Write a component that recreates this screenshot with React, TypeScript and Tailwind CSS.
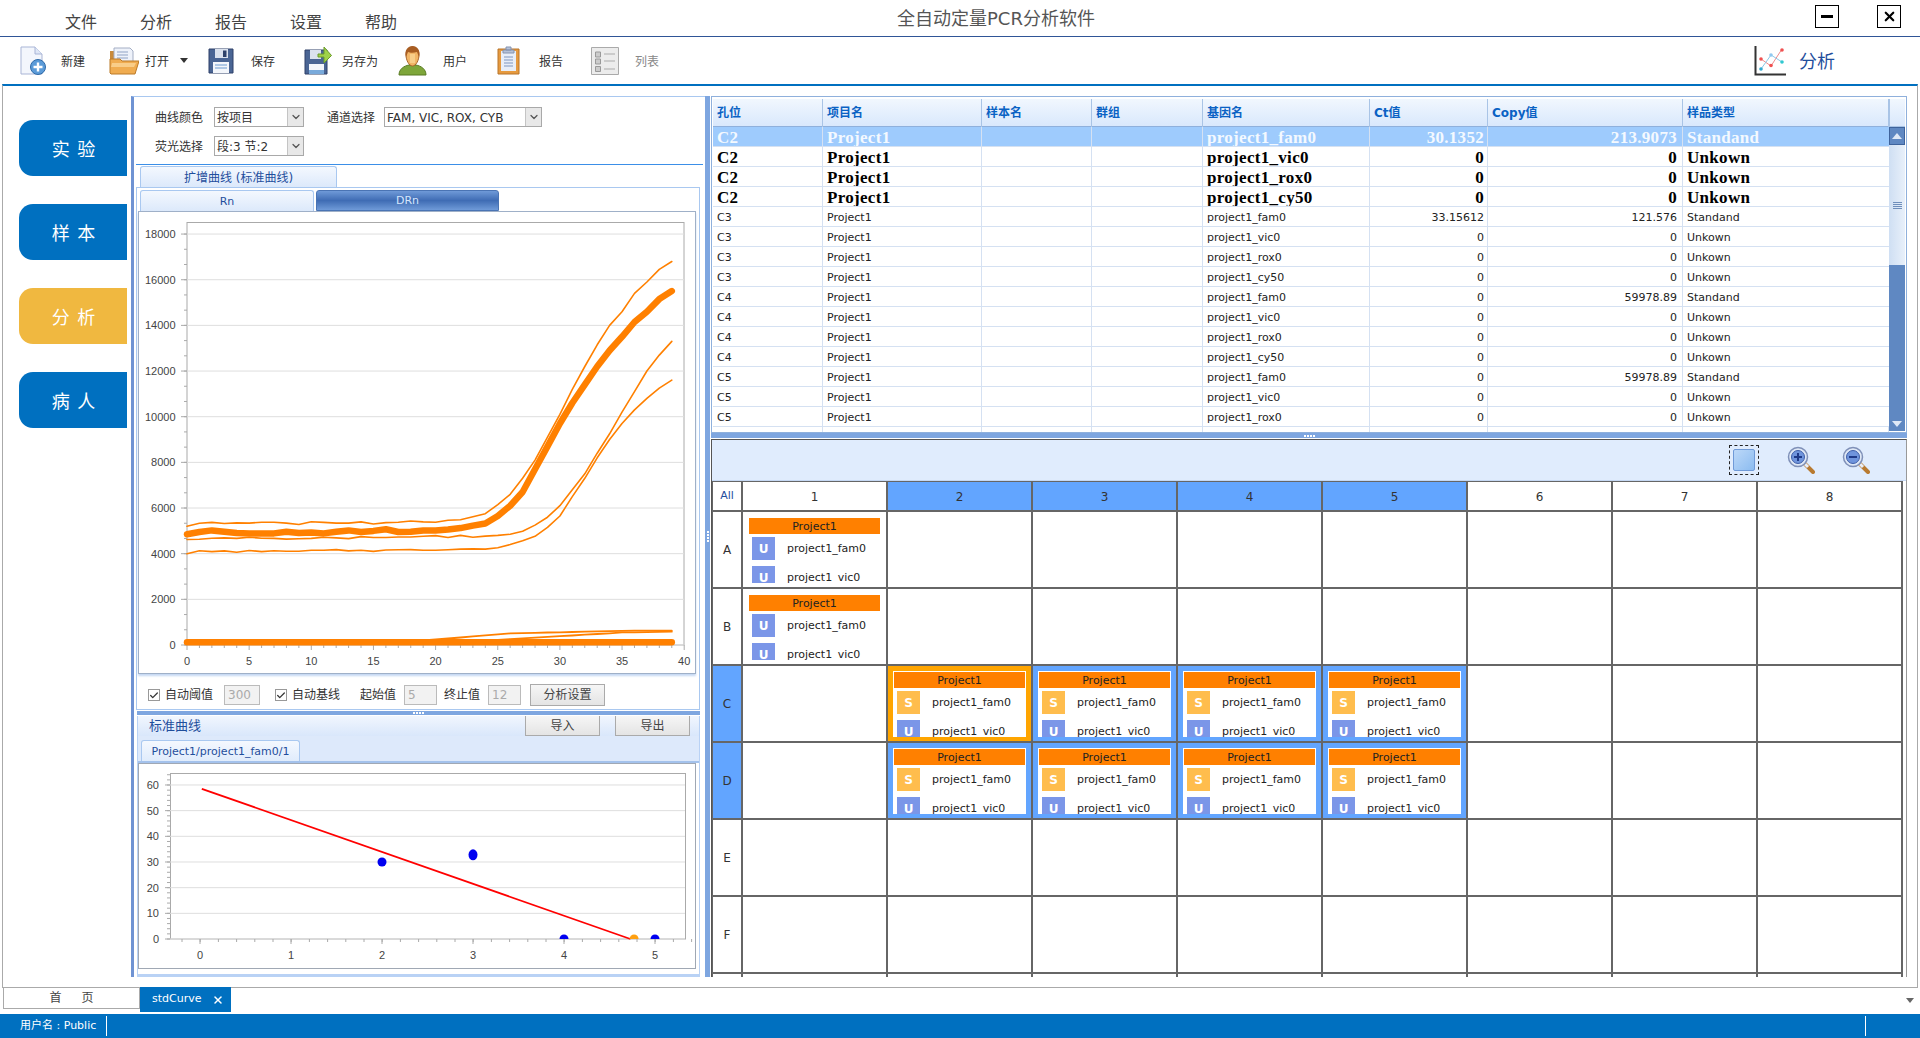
import { Check, ChevronDown, X } from "lucide-react";

const menus = ["文件", "分析", "报告", "设置", "帮助"];

const columns = ["孔位", "项目名", "样本名", "群组", "基因名", "Ct值", "Copy值", "样品类型"];

const tableRows = [
  ["C2", "project1_fam0", "30.1352", "213.9073", "Standand"],
  ["C2", "project1_vic0", "0", "0", "Unkown"],
  ["C2", "project1_rox0", "0", "0", "Unkown"],
  ["C2", "project1_cy50", "0", "0", "Unkown"],
  ["C3", "project1_fam0", "33.15612", "121.576", "Standand"],
  ["C3", "project1_vic0", "0", "0", "Unkown"],
  ["C3", "project1_rox0", "0", "0", "Unkown"],
  ["C3", "project1_cy50", "0", "0", "Unkown"],
  ["C4", "project1_fam0", "0", "59978.89", "Standand"],
  ["C4", "project1_vic0", "0", "0", "Unkown"],
  ["C4", "project1_rox0", "0", "0", "Unkown"],
  ["C4", "project1_cy50", "0", "0", "Unkown"],
  ["C5", "project1_fam0", "0", "59978.89", "Standand"],
  ["C5", "project1_vic0", "0", "0", "Unkown"],
  ["C5", "project1_rox0", "0", "0", "Unkown"],
];

// amplification curves, one value per cycle
const curveA = [5200, 5330, 5370, 5320, 5350, 5340, 5380, 5380, 5340, 5280, 5400, 5370, 5340, 5340, 5390, 5300, 5360, 5380, 5430, 5390, 5380, 5460, 5490, 5620, 5750, 6150, 6600, 7300, 8100, 9100, 10100, 11200, 12200, 13150, 14000, 14600, 15400, 15900, 16450, 16800];
const curveB = [4850, 4950, 5020, 4960, 4900, 4880, 4890, 4890, 4960, 4900, 4930, 4890, 4960, 5020, 4950, 5000, 5070, 4950, 4960, 5010, 5020, 5060, 5120, 5230, 5320, 5650, 6100, 6700, 7700, 8700, 9700, 10600, 11400, 12200, 12900, 13500, 14150, 14600, 15150, 15500];
const curveC = [4620, 4630, 4680, 4690, 4670, 4720, 4680, 4670, 4640, 4650, 4670, 4720, 4690, 4660, 4750, 4710, 4710, 4730, 4730, 4760, 4790, 4710, 4800, 4720, 4770, 4800, 4850, 4980, 5250, 5600, 6100, 6800, 7500, 8400, 9250, 10200, 11100, 12000, 12700, 13300];
const curveD = [4000, 4130, 4090, 4120, 4060, 4140, 4090, 4130, 4110, 4110, 4150, 4150, 4180, 4120, 4150, 4100, 4160, 4170, 4180, 4150, 4150, 4170, 4200, 4210, 4200, 4260, 4400, 4570, 4760, 5150, 5650, 6500, 7300, 8200, 9000, 9700, 10300, 10800, 11250, 11600];
const curveE = Array.from({ length: 40 }, (_, i) => (i < 18 ? 150 : i < 26 ? 150 + (i - 18) * 45 : Math.min(510 + (i - 26) * 12, 630)));
const curveF = Array.from({ length: 40 }, (_, i) => (i < 22 ? 130 : i < 35 ? 130 + (i - 22) * 32 : 550 + (i - 35) * 8));
const curveG = Array.from({ length: 40 }, () => 120);

const toPath = (vals: number[]) =>
  vals.map((v, i) => `${i === 0 ? "M" : "L"}${(187 + i * 12.43).toFixed(1)} ${(645 - v * 0.02283).toFixed(1)}`).join(" ");

function NewIcon() {
  return (
    <svg width="26" height="29" viewBox="0 0 26 29" className="ml-[20px] shrink-0">
      <path d="M1 1h14l7 7v20H1z" fill="#f3f6fc" stroke="#a9b5d6" />
      <path d="M15 1v7h7" fill="#dfe7f6" stroke="#a9b5d6" />
      <circle cx="18" cy="21" r="7.5" fill="#5b9bd8" stroke="#2f6aa8" />
      <path d="M18 16.5v9M13.5 21h9" stroke="#fff" strokeWidth="2.4" />
    </svg>
  );
}

function OpenIcon() {
  return (
    <svg width="30" height="28" viewBox="0 0 30 28" className="ml-[24px] shrink-0">
      <path d="M1 4h5v20H1z" fill="#c98a3a" />
      <path d="M5 1h16l3 3v12H5z" fill="#eef2fa" stroke="#a4aec4" />
      <path d="M8 5h11M8 8h11M8 11h11" stroke="#8fa2c4" />
      <path d="M1 26V12h10l2 2h17l-4 13H2z" fill="#f0ac50" stroke="#bb7a28" />
      <path d="M3 16h24l-2 4H2z" fill="#f9cd88" />
    </svg>
  );
}

function FloppyBody() {
  return (
    <>
      <path d="M1 1h24v24H1z" fill="#4a6594" stroke="#2e4169" />
      <path d="M7 1h13v9H7z" fill="#dbe2ee" />
      <path d="M15 2.500h3.500v6.500H15z" fill="#2e4169" />
      <path d="M5 14h16v11H5z" fill="#f3f6fb" />
      <path d="M7 17h12M7 20h12" stroke="#6a9ad0" />
    </>
  );
}

function SaveIcon() {
  return (
    <svg width="26" height="26" viewBox="0 0 26 26" className="ml-[20px] shrink-0">
      <FloppyBody />
    </svg>
  );
}

function SaveAsIcon() {
  return (
    <svg width="28" height="29" viewBox="0 0 28 29" className="ml-[29px] shrink-0">
      <g transform="translate(0 3)">
        <path d="M1 1h22v24H1z" fill="#4a6594" stroke="#2e4169" />
        <path d="M6 1h11v9H6z" fill="#dbe2ee" />
        <path d="M5 15h15v10H5z" fill="#f3f6fb" />
        <path d="M5 21h15v4H5z" fill="#79aadb" />
      </g>
      <path d="M14 8h6V1l7.500 8.500L20 17v-6h-6z" fill="#9ed24a" stroke="#6a9a2a" />
    </svg>
  );
}

function UserIcon() {
  return (
    <svg width="29" height="30" viewBox="0 0 29 30" className="ml-[20px] shrink-0">
      <path d="M1 29c0-6 5-9 10-10h7c5 1 10 4 10 10z" fill="#7ea63a" stroke="#587a22" />
      <path d="M8 9c0-5 3-8 6.500-8S21 4 21 9c0 5-3 11-6.500 11S8 14 8 9z" fill="#f2b667" stroke="#a8642a" />
      <path d="M8 11C6 4 10 0 14.500 0S23 4 21 11l-2-5c-3 1-7 1-9 0z" fill="#a85d22" />
      <path d="M12 8h5v9h-5z" fill="#fbd898" opacity="0.7" />
    </svg>
  );
}

function ReportIcon() {
  return (
    <svg width="23" height="29" viewBox="0 0 23 29" className="ml-[30px] shrink-0">
      <path d="M1 3h21v25H1z" fill="#e69a3f" stroke="#b8742a" />
      <path d="M4 5h15v20H4z" fill="#e8eef8" />
      <path d="M7 11h9M7 14h9M7 17h9M7 20h9" stroke="#7f96c0" />
      <path d="M6 4h11v3H6zM9 1h5v3H9z" fill="#b6c2d8" stroke="#8493b0" />
    </svg>
  );
}

function ListIcon() {
  return (
    <svg width="28" height="28" viewBox="0 0 28 28" className="ml-[28px] shrink-0">
      <path d="M.5.500h27v27H.5z" fill="#ececec" stroke="#aaa" />
      <path d="M4.500 5h5v5h-5zM4.500 12h5v5h-5zM4.500 19.500h5v5h-5z" fill="#ccc" stroke="#999" />
      <path d="M13 7h11M13 14h11M13 22h11" stroke="#aaa" />
    </svg>
  );
}

function ToolLabel({ text, className }: { text: string; className: string }) {
  return <span className={`pt-[2px] text-[12px] text-[#333] ${className}`}>{text}</span>;
}

function AnalysisIcon() {
  return (
    <svg width="32" height="30" viewBox="0 0 32 30" className="shrink-0">
      <path d="M1.500 0v28.500H32" fill="none" stroke="#333" strokeWidth="2" />
      <path d="M7 13l10 7 11-17" fill="none" stroke="#f08a8a" />
      <path d="M7 23l10-14 11 7" fill="none" stroke="#8ac8e8" />
      <circle cx="7" cy="13" r="1.800" fill="#f05050" />
      <circle cx="17" cy="19.500" r="1.800" fill="#f05050" />
      <circle cx="28" cy="4" r="1.800" fill="#f05050" />
      <circle cx="7" cy="23" r="1.800" fill="#30a8d0" />
      <circle cx="17" cy="9" r="1.800" fill="#90c8f0" />
      <circle cx="28" cy="16" r="1.800" fill="#30c8d0" />
    </svg>
  );
}

function Magnifier({ plus, className }: { plus: boolean; className: string }) {
  return (
    <svg width="28" height="28" viewBox="0 0 28 28" className={className}>
      <path d="M17 17l9 9" stroke="#b87a30" strokeWidth="4" strokeLinecap="round" />
      <path d="M18 18l3 3" stroke="#e8eef8" strokeWidth="3" />
      <circle cx="11" cy="11" r="9.500" fill="#dfe8f6" stroke="#7f90b8" strokeWidth="1.500" />
      <circle cx="11" cy="11" r="6.500" fill="#6f94dc" stroke="#3f5fa8" />
      <path d={plus ? "M7 11h8M11 7v8" : "M7 11h8"} stroke="#1f3a88" strokeWidth="2" />
    </svg>
  );
}

function SelectBox({ text, className }: { text: string; className: string }) {
  return (
    <div className={`flex h-[20px] items-stretch border border-[#a9a9a9] bg-white text-[12px] text-[#333] ${className}`}>
      <span className="flex-1 pl-[2px] leading-[20px]">{text}</span>
      <span className="flex w-[16px] items-center justify-center border-l border-[#c4c4c4] bg-[#e8e8e8]">
        <ChevronDown size={12} strokeWidth={2.5} className="text-[#555]" />
      </span>
    </div>
  );
}

function CheckBox({ className }: { className: string }) {
  return (
    <span className={`flex h-[12px] w-[12px] shrink-0 items-center justify-center border border-[#999] bg-white ${className}`}>
      <Check size={11} strokeWidth={3} className="text-[#333]" />
    </span>
  );
}

function NumInput({ text, className }: { text: string; className: string }) {
  return (
    <span className={`h-[20px] shrink-0 border border-[#bbb] bg-[#f2f2f2] pl-[3px] text-[12px] leading-[18px] text-[#aaa] ${className}`}>
      {text}
    </span>
  );
}

function Dots({ vertical }: { vertical?: boolean }) {
  return (
    <div className={vertical ? "flex flex-col gap-[1px]" : "flex gap-[1px]"}>
      <span className="h-[2px] w-[2px] bg-white" />
      <span className="h-[2px] w-[2px] bg-white" />
      <span className="h-[2px] w-[2px] bg-white" />
      <span className="h-[2px] w-[2px] bg-white" />
    </div>
  );
}

function AmplificationChart() {
  const yTicks = [0, 2000, 4000, 6000, 8000, 10000, 12000, 14000, 16000, 18000];
  const minorY = Array.from({ length: 28 }, (_, i) => 645 - i * 15.22);
  const xTicks = Array.from({ length: 41 }, (_, i) => i);
  return (
    <svg width="556" height="461" viewBox="139 212 556 461" className="block font-['Liberation_Sans',sans-serif]">
      <rect x="187" y="222.500" width="497" height="422.500" fill="#fff" stroke="#aaa" />
      {yTicks.map((t) => (
        <g key={t}>
          <line x1="187" x2="684" y1={645 - t * 0.02283} y2={645 - t * 0.02283} stroke="#dedede" />
          <line x1="181" x2="187" y1={645 - t * 0.02283} y2={645 - t * 0.02283} stroke="#aaa" />
          <text x="175.500" y={645 - t * 0.02283 + 4} textAnchor="end" fontSize="11" fill="#444">
            {t}
          </text>
        </g>
      ))}
      {minorY.map((y) => (
        <line key={y} x1="184" x2="187" y1={y} y2={y} stroke="#aaa" />
      ))}
      {xTicks.map((t) => (
        <line key={t} x1={187 + t * 12.43} x2={187 + t * 12.43} y1="645" y2={t % 5 === 0 ? 650 : 648} stroke="#aaa" />
      ))}
      {xTicks
        .filter((t) => t % 5 === 0)
        .map((t) => (
          <text key={t} x={187 + t * 12.43} y="665" textAnchor="middle" fontSize="11" fill="#444">
            {t}
          </text>
        ))}
      <g fill="none" stroke="#ff8000" strokeLinejoin="round" strokeLinecap="round">
        <path d={toPath(curveA)} strokeWidth="1.600" />
        <path d={toPath(curveC)} strokeWidth="1.600" />
        <path d={toPath(curveD)} strokeWidth="1.600" />
        <path d={toPath(curveB)} strokeWidth="6.500" />
        <path d={toPath(curveE)} strokeWidth="1.800" />
        <path d={toPath(curveF)} strokeWidth="1.800" />
        <path d={toPath(curveG)} strokeWidth="6.500" />
      </g>
    </svg>
  );
}

function StandardChart() {
  const yTicks = [0, 10, 20, 30, 40, 50, 60];
  const xTicks = [0, 1, 2, 3, 4, 5];
  const minorX = Array.from({ length: 29 }, (_, i) => 182 + i * 18.2);
  const minorY = Array.from({ length: 33 }, (_, i) => 939 - i * 5.133);
  const px = (v: number) => 200 + v * 91;
  const py = (v: number) => 939 - v * 2.567;
  return (
    <svg width="556" height="204" viewBox="139 764 556 204" className="block font-['Liberation_Sans',sans-serif]">
      <defs>
        <clipPath id="plotClip">
          <rect x="170" y="773" width="516" height="166" />
        </clipPath>
      </defs>
      <rect x="170.500" y="773.500" width="515" height="165.500" fill="#fff" stroke="#aaa" />
      {yTicks.map((t) => (
        <g key={t}>
          <line x1="170" x2="685" y1={py(t)} y2={py(t)} stroke="#dedede" />
          <line x1="165" x2="170" y1={py(t)} y2={py(t)} stroke="#aaa" />
          <text x="159" y={py(t) + 4} textAnchor="end" fontSize="11" fill="#444">
            {t}
          </text>
        </g>
      ))}
      {minorY.map((y) => (
        <line key={y} x1="167" x2="170" y1={y} y2={y} stroke="#aaa" />
      ))}
      {minorX.map((x) => (
        <line key={x} x1={x} x2={x} y1="939" y2="942" stroke="#aaa" />
      ))}
      {xTicks.map((t) => (
        <g key={t}>
          <line x1={px(t)} x2={px(t)} y1="939" y2="944" stroke="#aaa" />
          <text x={px(t)} y="959" textAnchor="middle" fontSize="11" fill="#444">
            {t}
          </text>
        </g>
      ))}
      <line x1={px(0.02)} y1={py(58.5)} x2={px(4.73)} y2={py(0)} stroke="#f00" strokeWidth="1.800" />
      <g clipPath="url(#plotClip)">
        <ellipse cx={px(2)} cy={py(30)} rx="4.500" ry="4.500" fill="#0000f0" />
        <ellipse cx={px(3)} cy={py(32.8)} rx="4.500" ry="5.500" fill="#0000f0" />
        <circle cx={px(4)} cy={py(0)} r="4.500" fill="#0000f0" />
        <circle cx={px(5)} cy={py(0)} r="4.500" fill="#0000f0" />
        <circle cx={px(4.77)} cy={py(0)} r="4.500" fill="#ffa010" />
      </g>
    </svg>
  );
}

function LeftPanel() {
  return (
    <div className="h-[881px] w-[574px] shrink-0 border-t border-l-[3px] border-t-[#a9c8f0] border-l-[#6f93d3] bg-white text-[#333]">
      <div className="mt-[10px] flex items-center">
        <span className="ml-[21px] pt-[2px] text-[12px]">曲线颜色</span>
        <SelectBox text="按项目" className="ml-[11px] w-[90px]" />
        <span className="ml-[23px] pt-[2px] text-[12px]">通道选择</span>
        <SelectBox text="FAM, VIC, ROX, CYB" className="ml-[9px] w-[158px]" />
      </div>
      <div className="mt-[9px] flex items-center">
        <span className="ml-[21px] pt-[2px] text-[12px]">荧光选择</span>
        <SelectBox text="段:3 节:2" className="ml-[11px] w-[90px]" />
      </div>
      <div className="mx-[2px] mt-[8px] h-px bg-[#3b8fe8]" />
      <div className="mt-px ml-[6px] flex h-[21px] w-[197px] items-center justify-center rounded-t-[3px] border border-b-0 border-[#a9c8f0] bg-gradient-to-b from-[#f4f8fe] to-[#dce9fb] pt-[2px] text-[12px] text-[#1f4e9c]">
        扩增曲线 (标准曲线)
      </div>
      <div className="ml-[2px] h-[523px] w-[564px] border border-[#a9c8f0]">
        <div className="mt-[2px] ml-[3px] flex h-[21px] text-[11px]">
          <div className="flex w-[174px] items-center justify-center rounded-t-[3px] border border-b-0 border-[#a9c8f0] bg-gradient-to-b from-[#f4f8fe] to-[#dce9fb] pt-[2px] text-[#1f4e9c]">
            Rn
          </div>
          <div className="ml-[2px] flex w-[183px] items-center justify-center rounded-t-[3px] border border-[#4a74b4] bg-gradient-to-b from-[#6f9ad8] via-[#3f6cb4] to-[#6f9ad8] pt-[2px] text-[#d6e6fc]">
            DRn
          </div>
        </div>
        <div className="ml-px h-[463px] w-[558px] border border-[#9fb0c8] shadow-[0_2px_2px_#c5d8f3]">
          <AmplificationChart />
        </div>
        <div className="mt-[10px] flex h-[22px] items-center text-[12px]">
          <CheckBox className="ml-[11px]" />
          <span className="ml-[5px] shrink-0">自动阈值</span>
          <NumInput text="300" className="ml-[11px] w-[36px]" />
          <CheckBox className="ml-[15px]" />
          <span className="ml-[5px] shrink-0">自动基线</span>
          <span className="ml-[20px] shrink-0">起始值</span>
          <NumInput text="5" className="ml-[8px] w-[33px]" />
          <span className="ml-[7px] shrink-0">终止值</span>
          <NumInput text="12" className="ml-[8px] w-[33px]" />
          <button className="ml-[9px] h-[22px] w-[75px] shrink-0 border border-[#aaa] bg-gradient-to-b from-[#f6f6f6] to-[#e4e4e4] text-[12px] text-[#444]">
            分析设置
          </button>
        </div>
      </div>
      <div className="mt-px ml-[3px] flex h-[4px] w-[563px] items-center justify-center bg-[#7ea6e0]">
        <Dots />
      </div>
      <div className="mt-px ml-[3px] h-[261px] w-[563px] border-x border-b-[3px] border-[#b9d2f5]">
        <div className="flex h-[20px] items-stretch bg-gradient-to-b from-[#f1f6fe] to-[#d9e7fb] text-[12px]">
          <span className="ml-[11px] self-center text-[13px] text-[#1f4e9c]">标准曲线</span>
          <button className="ml-auto w-[75px] border border-t-0 border-[#aaa] bg-gradient-to-b from-[#f6f6f6] to-[#e4e4e4] text-[#444]">
            导入
          </button>
          <button className="mr-[9px] ml-[15px] w-[75px] border border-t-0 border-[#aaa] bg-gradient-to-b from-[#f6f6f6] to-[#e4e4e4] text-[#444]">
            导出
          </button>
        </div>
        <div className="h-[27px] border-b-2 border-[#a4c2ec] bg-[#dde9fb] pt-[4px] pl-[3px]">
          <div className="flex h-[21px] w-[159px] items-center justify-center rounded-t-[3px] border border-b-0 border-[#a9c8f0] bg-gradient-to-b from-[#f4f8fe] to-[#e0ecfc] pt-[2px] text-[11px] whitespace-nowrap text-[#1f4e9c]">
            Project1/project1_fam0/1
          </div>
        </div>
        <div className="h-[206px] w-[558px] border border-[#a0a8b4]">
          <StandardChart />
        </div>
      </div>
    </div>
  );
}

function DataTable() {
  const gridCols = "grid grid-cols-[110px_159px_110px_111px_167px_118px_195px_206px]";
  const blankCells = ["a", "b", "c", "d", "e", "f", "g", "h"];
  return (
    <div className="ml-px h-[337px] w-[1196px] overflow-hidden border border-[#8fb0dc] p-px pt-[2px]">
      <div className="flex">
        <div className="w-[1176px]">
          <div className={`${gridCols} h-[28px] border-b border-[#8fb0dc] bg-gradient-to-b from-[#f1f7fe] to-[#d9e8fc] text-[12px] font-bold text-[#0a62c4]`}>
            {columns.map((c) => (
              <div key={c} className="border-r border-[#a9c4e6] pl-[4px] leading-[28px]">
                {c}
              </div>
            ))}
          </div>
          {tableRows.map((r, i) => {
            const big = i < 4;
            const rowStyle = i === 0
              ? "bg-[#9ecbfd] text-[#f4f9ff] font-bold text-[17px] tracking-[0.3px] font-['Liberation_Serif',serif]"
              : big
                ? "text-black font-bold text-[17px] tracking-[0.3px] font-['Liberation_Serif',serif]"
                : "text-[#222] text-[11px]";
            return (
              <div key={i} className={`${gridCols} h-[20px] overflow-hidden border-b border-[#d5e1f2] leading-[21px] ${rowStyle}`}>
                <div className="border-r border-[#d5e1f2] pl-[4px]">{r[0]}</div>
                <div className="border-r border-[#d5e1f2] pl-[4px]">Project1</div>
                <div className="border-r border-[#d5e1f2]" />
                <div className="border-r border-[#d5e1f2]" />
                <div className="border-r border-[#d5e1f2] pl-[4px]">{r[1]}</div>
                <div className="border-r border-[#d5e1f2] pr-[3px] text-right">{r[2]}</div>
                <div className="border-r border-[#d5e1f2] pr-[5px] text-right">{r[3]}</div>
                <div className="pl-[4px]">{r[4]}</div>
              </div>
            );
          })}
          <div className={`${gridCols} h-[5px]`}>
            {blankCells.map((c) => (
              <div key={c} className="border-r border-[#d5e1f2]" />
            ))}
          </div>
        </div>
        <div className="flex w-[16px] flex-col">
          <div className="h-[28px] border-b border-l border-[#a9c4e6] bg-gradient-to-b from-[#f1f7fe] to-[#d9e8fc]" />
          <div className="flex h-[304px] flex-col bg-[#5f88c2]">
            <div className="flex h-[18px] items-center justify-center border border-[#3e639c]">
              <span className="border-x-[5px] border-b-[6px] border-x-transparent border-b-[#dfe9f7]" />
            </div>
            <div className="flex h-[120px] items-center justify-center bg-gradient-to-r from-[#cfdff3] to-[#e8f0fa]">
              <span className="h-[7px] w-[9px] border-y-[3px] border-double border-[#6f8fbc]" />
            </div>
            <div className="mt-auto mb-[4px] flex justify-center">
              <span className="border-x-[5px] border-t-[6px] border-x-transparent border-t-[#dfe9f7]" />
            </div>
          </div>
        </div>
      </div>
    </div>
  );
}

function WellCard({ type }: { type: string }) {
  const boxColor = type === "S" ? "bg-[#ffbd4d]" : "bg-[#7b96e8]";
  return (
    <div className="h-[66px] overflow-hidden bg-white pt-px text-[11px] text-[#222]">
      <div className="mx-px h-[16px] bg-[#ff8000] text-center leading-[18px]">Project1</div>
      <div className="mt-[3px] flex items-center">
        <span className={`ml-[4px] flex h-[23px] w-[23px] items-center justify-center text-[12px] font-bold text-white ${boxColor}`}>{type}</span>
        <span className="ml-[12px] pt-[2px]">project1_fam0</span>
      </div>
      <div className="mt-[6px] flex items-center">
        <span className="ml-[4px] flex h-[23px] w-[23px] items-center justify-center bg-[#7b96e8] text-[12px] font-bold text-white">U</span>
        <span className="ml-[12px] pt-[2px]">project1_vic0</span>
      </div>
    </div>
  );
}

function WellPlate() {
  const headers = [1, 2, 3, 4, 5, 6, 7, 8];
  const rows = ["A", "B", "C", "D", "E", "F"];
  const cellKeys = [1, 2, 3, 4, 5, 6, 7, 8, 9];
  return (
    <div className="mt-px ml-px h-[538px] w-[1196px] overflow-hidden border-t border-r border-l border-t-[#555] border-r-[#999] border-l-[#555] bg-white">
      <div className="flex h-[41px] items-center border-b border-[#c5d8f3] bg-[#e0ecfd]">
        <div className="ml-auto flex h-[30px] w-[30px] items-center justify-center border border-dashed border-[#222]">
          <div className="h-[22px] w-[22px] rounded-[2px] border border-[#6f9ad8] bg-gradient-to-br from-[#bcd8f8] to-[#8cbcf0]" />
        </div>
        <Magnifier plus className="ml-[28px]" />
        <Magnifier plus={false} className="mr-[36px] ml-[27px]" />
      </div>
      <div className="grid w-[1191px] grid-cols-[28px_repeat(8,143px)] grid-rows-[28px_repeat(6,75px)_10px] gap-[2px] bg-[#666] p-px pr-[2px] text-[11px] text-[#333]">
        <div className="flex items-center justify-center bg-white pt-px text-[#1f4e9c]">All</div>
        {headers.map((h) => (
          <div key={h} className={`flex items-center justify-center pt-px text-[12px] ${h >= 2 && h <= 5 ? "bg-[#62a5ff]" : "bg-white"}`}>
            {h}
          </div>
        ))}
        {rows.map((row) => (
          <div key={row} className="contents">
            <div className={`flex items-center justify-center text-[12px] ${row === "C" || row === "D" ? "bg-[#62a5ff]" : "bg-white"}`}>{row}</div>
            {headers.map((h) => {
              if ((row === "A" || row === "B") && h === 1) {
                return (
                  <div key={h} className="bg-white p-[5px]">
                    <WellCard type="U" />
                  </div>
                );
              }
              if ((row === "C" || row === "D") && h >= 2 && h <= 5) {
                return (
                  <div key={h} className={`p-[5px] ${row === "C" && h === 2 ? "bg-[#ffa500]" : "bg-[#62a5ff]"}`}>
                    <WellCard type="S" />
                  </div>
                );
              }
              return <div key={h} className="bg-white" />;
            })}
          </div>
        ))}
        {cellKeys.map((k) => (
          <div key={k} className="bg-white" />
        ))}
      </div>
    </div>
  );
}

export default function App() {
  return (
    <div className="flex h-[1038px] w-[1920px] flex-col overflow-hidden bg-white font-['DejaVu_Sans','Noto_Sans_CJK_SC',sans-serif]">
      {/* Title bar */}
      <div className="flex h-[37px] shrink-0 border-b border-[#2f5597]">
        <div className="flex w-[897px] gap-[43px] pt-[12px] pl-[65px] text-[16px] leading-[22px] text-[#444]">
          {menus.map((m) => (
            <span key={m}>{m}</span>
          ))}
        </div>
        <div className="pt-[7px] text-[18px] leading-[24px] text-[#555]">全自动定量PCR分析软件</div>
        <div className="mt-[5px] mr-[19px] ml-auto flex h-[23px] gap-[38px]">
          <button className="flex w-[24px] items-center justify-center border border-black">
            <span className="h-[3px] w-[12px] bg-black" />
          </button>
          <button className="flex w-[24px] items-center justify-center border border-black">
            <X size={15} strokeWidth={3.5} className="text-black" />
          </button>
        </div>
      </div>

      {/* Toolbar */}
      <div className="flex h-[47px] shrink-0 items-center">
        <NewIcon />
        <ToolLabel text="新建" className="ml-[15px]" />
        <OpenIcon />
        <ToolLabel text="打开" className="ml-[6px]" />
        <span className="ml-[11px] border-x-[4px] border-t-[5px] border-x-transparent border-t-[#333]" />
        <SaveIcon />
        <ToolLabel text="保存" className="ml-[17px]" />
        <SaveAsIcon />
        <ToolLabel text="另存为" className="ml-[10px]" />
        <UserIcon />
        <ToolLabel text="用户" className="ml-[16px]" />
        <ReportIcon />
        <ToolLabel text="报告" className="ml-[19px]" />
        <ListIcon />
        <span className="ml-[16px] pt-[2px] text-[12px] text-[#888]">列表</span>
        <div className="mr-[85px] ml-auto flex items-center">
          <AnalysisIcon />
          <span className="ml-[13px] pt-[2px] text-[18px] text-[#1f4e9c]">分析</span>
        </div>
      </div>

      {/* Main area */}
      <div className="ml-[2px] flex h-[904px] w-[1916px] shrink-0 border-x border-t-2 border-b border-x-[#aaa] border-t-[#0070c0] border-b-[#aaa] pt-[10px]">
        <div className="flex w-[128px] shrink-0 flex-col gap-[28px] pt-[24px] pl-[16px]">
          <div className="flex h-[56px] w-[108px] items-center justify-center rounded-l-[14px] bg-[#0070c0] pt-[2px] pl-[2px] text-[18px] tracking-[1px] text-white">实 验</div>
          <div className="flex h-[56px] w-[108px] items-center justify-center rounded-l-[14px] bg-[#0070c0] pt-[2px] pl-[2px] text-[18px] tracking-[1px] text-white">样 本</div>
          <div className="flex h-[56px] w-[108px] items-center justify-center rounded-l-[14px] bg-[#f0b840] pt-[2px] pl-[2px] text-[18px] tracking-[1px] text-white">分 析</div>
          <div className="flex h-[56px] w-[108px] items-center justify-center rounded-l-[14px] bg-[#0070c0] pt-[2px] pl-[2px] text-[18px] tracking-[1px] text-white">病 人</div>
        </div>
        <LeftPanel />
        <div className="flex h-[881px] w-[5px] shrink-0 items-center justify-center bg-[#7ea6e0]">
          <Dots vertical />
        </div>
        <div className="flex w-[1197px] flex-col">
          <DataTable />
          <div className="ml-px flex h-[5px] w-[1196px] items-center justify-center bg-[#7ea6e0]">
            <Dots />
          </div>
          <WellPlate />
        </div>
      </div>

      {/* Page tabs */}
      <div className="flex h-[26px] shrink-0 pl-[3px]">
        <div className="flex h-[21px] w-[137px] items-center justify-center border-x border-b border-[#aaa] text-[12px] text-[#444]">
          首<span className="ml-[20px]">页</span>
        </div>
        <div className="-mt-px flex h-[25px] w-[91px] items-center bg-[#0070c0] pl-[12px] text-[11px] text-white">
          stdCurve
          <X size={12} strokeWidth={3} className="ml-[11px]" />
        </div>
        <span className="mt-[10px] mr-[6px] ml-auto h-0 border-x-[4px] border-t-[5px] border-x-transparent border-t-[#666]" />
      </div>

      {/* Status bar */}
      <div className="flex h-[24px] shrink-0 items-center bg-[#0070c0] text-[11px] text-white">
        <span className="ml-[20px]">用户名 : Public</span>
        <span className="ml-[10px] h-[20px] w-px bg-white" />
        <span className="mr-[54px] ml-auto h-[20px] w-px bg-white" />
      </div>
    </div>
  );
}
